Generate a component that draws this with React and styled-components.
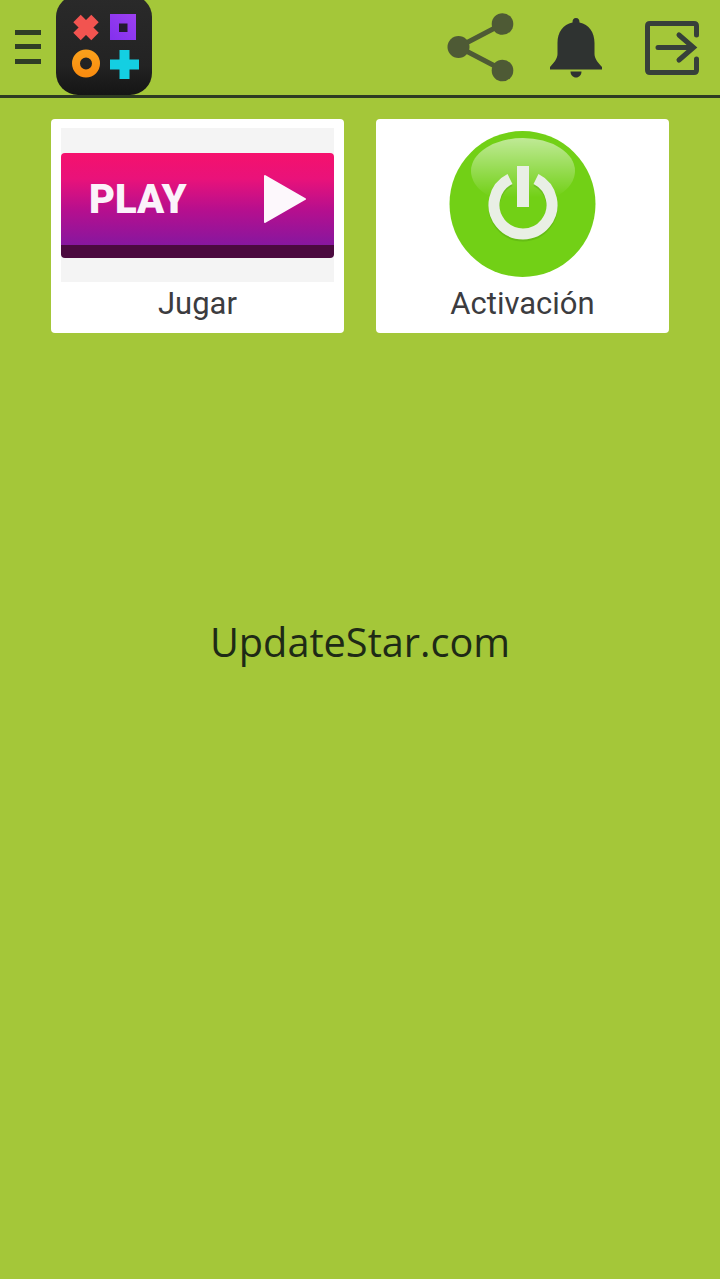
import styled, { createGlobalStyle } from "styled-components";

const GlobalStyle = createGlobalStyle`
  html, body {
    margin: 0;
    padding: 0;
    background: #a4c739;
  }
`;

const Page = styled.div`
  width: 720px;
  height: 1279px;
  overflow: hidden;
  display: flex;
  flex-direction: column;
  background: #a4c739;
`;

const Header = styled.header`
  height: 95px;
  flex: none;
  display: flex;
  align-items: center;
  padding: 0 21px 0 15px;
  border-bottom: 3px solid #2e3b22;
`;

const Burger = styled.button`
  width: 26px;
  height: 34px;
  padding: 0;
  margin: 0 15px 2px 0;
  border: 0;
  background: none;
  display: flex;
  flex-direction: column;
  justify-content: space-between;
`;

const BurgerLine = styled.span`
  display: block;
  height: 5px;
  background: #2f3e25;
`;

const Logo = styled.svg`
  width: 96px;
  height: 95px;
  display: block;
`;

const Actions = styled.div`
  margin-left: auto;
  display: flex;
  align-items: center;
`;

const ActionIcon = styled.svg`
  display: block;
  width: ${(props) => props.$w}px;
  height: ${(props) => props.$h}px;
  margin-left: ${(props) => props.$gap}px;
`;

const Grid = styled.main`
  display: grid;
  grid-template-columns: 293px 293px;
  column-gap: 32px;
  padding: 21px 51px 0;
`;

const Card = styled.a`
  height: 214px;
  box-sizing: border-box;
  padding: 9px 10px 0;
  background: #fff;
  border-radius: 4px;
  display: flex;
  flex-direction: column;
`;

const Picture = styled.div`
  height: 154px;
  flex: none;
  display: flex;
  align-items: center;
  justify-content: center;
  background: ${(props) => props.$bg || "#fff"};
`;

const PlayButton = styled.div`
  width: 273px;
  height: 105px;
  box-sizing: border-box;
  padding: 0 28px 0 28px;
  border-radius: 4px;
  border-bottom: 13px solid #4b0a3f;
  background: linear-gradient(180deg, #f5116d 0%, #e9127a 28%, #b60f8e 62%, #87179f 100%);
  display: flex;
  align-items: center;
  justify-content: space-between;
`;

const PlayText = styled.span`
  padding-top: 2px;
  font-family: Roboto, "Liberation Sans", sans-serif;
  font-weight: 900;
  font-size: 40px;
  line-height: 1;
  color: #fbf3fa;
`;

const CardLabel = styled.div`
  height: 44px;
  line-height: 44px;
  text-align: center;
  font-family: Roboto, "Liberation Sans", sans-serif;
  font-size: 31px;
  color: #3c3c3f;
`;

const Brand = styled.div`
  margin-top: 280px;
  text-align: center;
  font-family: "Open Sans", "Noto Sans", sans-serif;
  font-size: 39.700px;
  line-height: 58px;
  color: #1e2a16;
`;

const App = () => (
  <Page>
    <GlobalStyle />
    <Header>
      <Burger aria-label="Menú">
        <BurgerLine />
        <BurgerLine />
        <BurgerLine />
      </Burger>
      <Logo viewBox="0 0 96 95">
        <defs>
          <linearGradient id="logoBg" x1="0" y1="0" x2="0" y2="1">
            <stop offset="0" stopColor="#2a2a2a" />
            <stop offset="0.7" stopColor="#232323" />
            <stop offset="1" stopColor="#151515" />
          </linearGradient>
          <linearGradient id="logoPurple" x1="0" y1="1" x2="1" y2="0">
            <stop offset="0" stopColor="#8330ee" />
            <stop offset="1" stopColor="#9c40f0" />
          </linearGradient>
          <linearGradient id="logoOrange" x1="0" y1="0" x2="0" y2="1">
            <stop offset="0" stopColor="#fb9f1a" />
            <stop offset="1" stopColor="#f98d10" />
          </linearGradient>
        </defs>
        <rect x="0" y="-5" width="96" height="100" rx="22" fill="url(#logoBg)" />
        <path d="M21 18.500L39 36.500M39 18.500L21 36.500" fill="none" stroke="#f25450" strokeWidth="10.500" />
        <rect x="54" y="14" width="26" height="26" fill="url(#logoPurple)" />
        <rect x="63" y="23.500" width="8.500" height="8.500" fill="#241a30" />
        <circle cx="30" cy="63.500" r="10" fill="none" stroke="url(#logoOrange)" strokeWidth="8" />
        <path d="M54 64.500H83M68.500 50V79" fill="none" stroke="#14cfe2" strokeWidth="10" />
      </Logo>
      <Actions>
        <ActionIcon $w={67} $h={70} $gap={0} viewBox="0 0 67 70">
          <path d="M55.500 11L11.500 34L55.500 57" fill="none" stroke="#4e5a35" strokeWidth="5" />
          <circle cx="55.500" cy="11" r="10.800" fill="#4e5a35" />
          <circle cx="11.500" cy="34" r="11" fill="#4e5a35" />
          <circle cx="55.500" cy="57.500" r="10.800" fill="#4e5a35" />
        </ActionIcon>
        <ActionIcon $w={52} $h={60} $gap={36} viewBox="0 0 52 60">
          <path
            d="M26 0C23.500 0 22.500 1.500 22.500 4.500C13 6.500 7.500 14 7.500 25V36C7.500 41 3.500 45 0 49V51.500H52V49C48.500 45 44.500 41 44.500 36V25C44.500 14 39 6.500 29.500 4.500C29.500 1.500 28.500 0 26 0Z"
            fill="#2f3331"
          />
          <path d="M20.500 53.500H31.500C31.500 57 29 59.500 26 59.500C23 59.500 20.500 57 20.500 53.500Z" fill="#2f3331" />
        </ActionIcon>
        <ActionIcon $w={54} $h={54} $gap={43} viewBox="0 0 54 54">
          <path
            d="M51.500 14V5C51.500 3.500 50.500 2.500 49 2.500H5C3.500 2.500 2.500 3.500 2.500 5V49C2.500 50.500 3.500 51.500 5 51.500H49C50.500 51.500 51.500 50.500 51.500 49V38"
            fill="none"
            stroke="#37403a"
            strokeWidth="5"
            strokeLinecap="round"
          />
          <path
            d="M13 26.500H48M34 14L48.500 26.500L34 39"
            fill="none"
            stroke="#37403a"
            strokeWidth="5"
            strokeLinecap="round"
          />
        </ActionIcon>
      </Actions>
    </Header>
    <Grid>
      <Card>
        <Picture $bg="#f4f4f4">
          <PlayButton>
            <PlayText>PLAY</PlayText>
            <svg width="42" height="48" viewBox="0 0 42 48">
              <path d="M1 1L41 24L1 47Z" fill="#fdf8fc" stroke="#fdf8fc" strokeLinejoin="round" strokeWidth="2" />
            </svg>
          </PlayButton>
        </Picture>
        <CardLabel>Jugar</CardLabel>
      </Card>
      <Card>
        <Picture>
          <svg width="148" height="148" viewBox="0 0 148 148">
            <defs>
              <linearGradient id="shine" x1="0" y1="0" x2="0" y2="1">
                <stop offset="0" stopColor="#fff" stopOpacity="0.55" />
                <stop offset="0.9" stopColor="#fff" stopOpacity="0" />
              </linearGradient>
            </defs>
            <circle cx="73.500" cy="73" r="73" fill="#72d016" />
            <ellipse cx="74" cy="40" rx="52" ry="33" fill="url(#shine)" />
            <path d="M61 50A29 29 0 1 0 87 50" fill="none" stroke="#4d9a10" strokeOpacity="0.35" strokeWidth="11" />
            <path d="M61 48A29 29 0 1 0 87 48" fill="none" stroke="#e9efe5" strokeWidth="11" />
            <rect x="68" y="35" width="12" height="41" fill="#e9efe5" />
          </svg>
        </Picture>
        <CardLabel>Activación</CardLabel>
      </Card>
    </Grid>
    <Brand>UpdateStar.com</Brand>
  </Page>
);

export default App;
